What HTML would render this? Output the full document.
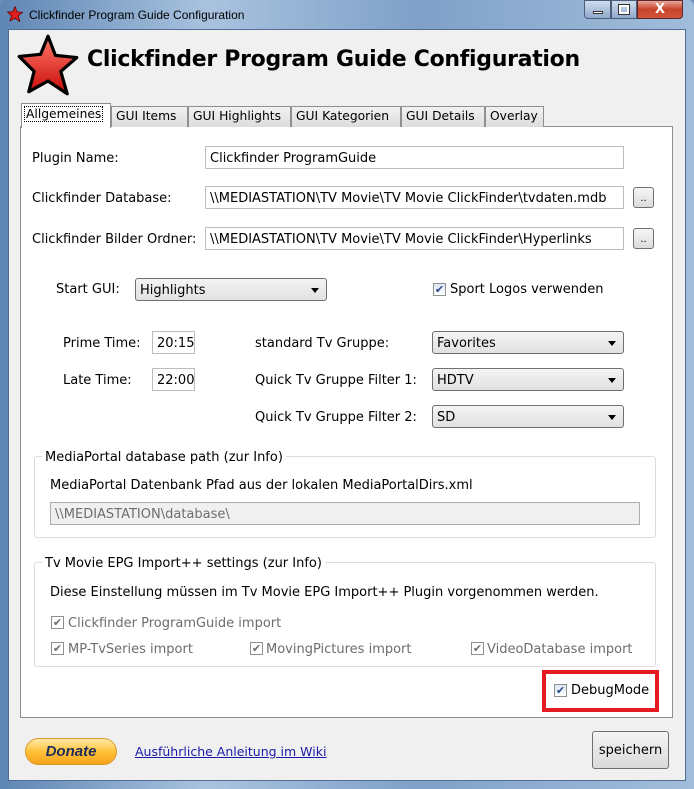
<!DOCTYPE html>
<html><head><meta charset="utf-8"><style>
*{box-sizing:border-box;margin:0;padding:0}
body{width:694px;height:789px;overflow:hidden;background:#6d8fb8;font-family:"DejaVu Sans","Liberation Sans",sans-serif;font-size:13px;color:#000;position:relative}
.a{position:absolute;white-space:nowrap}
.frame{position:absolute;left:0;top:0;width:694px;height:789px;background:linear-gradient(90deg,#5f86b4,#a9c3df 30%,#7fa0c8 60%,#a2bddb);border-radius:6px 6px 0 0}
.client{position:absolute;left:8px;top:29px;width:678px;height:752px;background:#f0f0f0;border:1px solid #526d92}
.panel{position:absolute;left:20px;top:126px;width:653px;height:592px;background:#fff;border:1px solid #8e8f8f}
.tab{position:absolute;top:106px;height:21px;background:linear-gradient(#f2f2f2,#dcdcdc);border:1px solid #8e8f8f;border-bottom:none;padding:2px 0 0 4px;font-size:12.3px;white-space:nowrap;overflow:hidden}
.inp{position:absolute;height:23px;background:#fff;border:1px solid #bdbdbd;padding:4px 0 0 4px;font-size:13px;white-space:nowrap;overflow:hidden}
.btn{position:absolute;width:21px;height:21px;border:1px solid #707070;border-radius:3px;background:linear-gradient(#f6f6f6,#dcdcdc);font-size:10px;text-align:center;line-height:22px}
.cb{position:absolute;width:13px;height:13px;border:1px solid #8e8f8f;background:linear-gradient(#dde6f2,#fff);font-size:11px;line-height:11px;text-align:center;color:#2a4a8a}
.dd{position:absolute;height:23px;border:1px solid #707070;border-radius:3px;background:linear-gradient(#f4f4f4,#e1e1e1);padding:4px 0 0 4px}
.dd:after{content:"";position:absolute;right:7px;top:9px;border:4px solid transparent;border-top:5px solid #000;border-bottom:none}
.grp{position:absolute;border:1px solid #dcdcdc;border-radius:3px}
.grey{color:#6d6d6d}
.t{margin-top:1px}
</style></head><body>
<div class="frame"></div>
<svg class="a" style="left:7px;top:6px" width="16" height="16" viewBox="0 0 60 60"><path d="M30 2 L38 22 L58 24 L42 37 L48 58 L30 46 L11 56 L17 37 L2 23 L22 21Z" fill="#e02020" stroke="#600" stroke-width="3"/></svg>
<div class="a" style="left:29px;top:8px;font-family:'Liberation Sans',sans-serif;font-size:12px">Clickfinder Program Guide Configuration</div>
<div class="a" style="left:584px;top:0;width:27px;height:19px;background:linear-gradient(#cfdcec,#8fa9cb);border:1px solid #4a5d7a;border-radius:0 0 0 4px"><div style="position:absolute;left:8px;top:10px;width:10px;height:3px;background:#fff;border:1px solid #333"></div></div>
<div class="a" style="left:611px;top:0;width:26px;height:19px;background:linear-gradient(#cfdcec,#8fa9cb);border:1px solid #4a5d7a"><div style="position:absolute;left:7px;top:4px;width:10px;height:9px;border:2px solid #fff;outline:1px solid #333"></div></div>
<div class="a" style="left:637px;top:0;width:46px;height:19px;background:linear-gradient(#e8a497,#c7432b 50%,#d0553a);border:1px solid #5a2a2a;border-radius:0 0 4px 0;color:#fff;font-weight:bold;text-align:center;font-size:13px;line-height:17px">X</div>
<div class="client"></div>
<svg class="a" style="left:16px;top:33px" width="64" height="64" viewBox="0 0 60 60"><defs><linearGradient id="g" x1="0" y1="0" x2="0" y2="1"><stop offset="0" stop-color="#ff7a6a"/><stop offset="1" stop-color="#c80a0a"/></linearGradient></defs><path d="M30 3 L37 21 L57 23 L42 36 L48 57 L30 45 L12 55 L17 36 L3 22 L23 20Z" fill="url(#g)" stroke="#000" stroke-width="3" stroke-linejoin="round"/></svg>
<div class="a" style="left:87px;top:47px;font-family:'DejaVu Sans',sans-serif;font-weight:bold;font-size:22px;letter-spacing:-0.3px">Clickfinder Program Guide Configuration</div>
<div class="panel"></div>
<div class="tab" style="left:111px;width:77px">GUI Items</div>
<div class="tab" style="left:188px;width:103px">GUI Highlights</div>
<div class="tab" style="left:291px;width:110px">GUI Kategorien</div>
<div class="tab" style="left:401px;width:84px">GUI Details</div>
<div class="tab" style="left:485px;width:59px">Overlay</div>
<div class="tab" style="left:21px;top:103px;width:90px;height:25px;background:#fff;padding:2px 2px"><span style="border:1px dotted #000;padding:0 1px;display:inline-block">Allgemeines</span></div>
<div class="a" style="left:32px;top:151px">Plugin Name:</div>
<div class="a" style="left:32px;top:191px">Clickfinder Database:</div>
<div class="a" style="left:32px;top:232px">Clickfinder Bilder Ordner:</div>
<div class="inp" style="left:205px;top:146px;width:419px">Clickfinder ProgramGuide</div>
<div class="inp" style="left:205px;top:186px;width:419px">\\MEDIASTATION\TV Movie\TV Movie ClickFinder\tvdaten.mdb</div>
<div class="inp" style="left:205px;top:227px;width:419px">\\MEDIASTATION\TV Movie\TV Movie ClickFinder\Hyperlinks</div>
<div class="btn" style="left:633px;top:187px">..</div>
<div class="btn" style="left:633px;top:228px">..</div>
<div class="a" style="left:56px;top:282px">Start GUI:</div>
<div class="dd" style="left:135px;top:278px;width:192px">Highlights</div>
<div class="cb" style="left:433px;top:283px">✔</div>
<div class="a" style="left:450px;top:282px">Sport Logos verwenden</div>
<div class="a" style="left:63px;top:336px">Prime Time:</div>
<div class="a" style="left:63px;top:373px">Late Time:</div>
<div class="inp" style="left:152px;top:331px;width:43px">20:15</div>
<div class="inp" style="left:152px;top:368px;width:43px">22:00</div>
<div class="a" style="left:255px;top:336px">standard Tv Gruppe:</div>
<div class="a" style="left:255px;top:373px">Quick Tv Gruppe Filter 1:</div>
<div class="a" style="left:255px;top:410px">Quick Tv Gruppe Filter 2:</div>
<div class="dd" style="left:432px;top:331px;width:192px">Favorites</div>
<div class="dd" style="left:432px;top:368px;width:192px">HDTV</div>
<div class="dd" style="left:432px;top:405px;width:192px">SD</div>
<div class="grp" style="left:34px;top:456px;width:622px;height:82px"></div>
<div class="a" style="left:42px;top:450px;background:#fff;padding:0 3px">MediaPortal database path (zur Info)</div>
<div class="a" style="left:50px;top:478px">MediaPortal Datenbank Pfad aus der lokalen MediaPortalDirs.xml</div>
<div class="inp grey" style="left:50px;top:502px;width:590px;background:#f0f0f0;border-color:#adadad">\\MEDIASTATION\database\</div>
<div class="grp" style="left:34px;top:562px;width:622px;height:105px"></div>
<div class="a" style="left:42px;top:556px;background:#fff;padding:0 3px">Tv Movie EPG Import++ settings (zur Info)</div>
<div class="a" style="left:50px;top:585px">Diese Einstellung müssen im Tv Movie EPG Import++ Plugin vorgenommen werden.</div>
<div class="cb grey" style="left:51px;top:616px;color:#6d6d6d;background:#fff">✔</div>
<div class="a grey" style="left:68px;top:616px">Clickfinder ProgramGuide import</div>
<div class="cb" style="left:51px;top:642px;color:#6d6d6d;background:#fff">✔</div>
<div class="a grey" style="left:68px;top:642px">MP-TvSeries import</div>
<div class="cb" style="left:250px;top:642px;color:#6d6d6d;background:#fff">✔</div>
<div class="a grey" style="left:266px;top:642px">MovingPictures import</div>
<div class="cb" style="left:471px;top:642px;color:#6d6d6d;background:#fff">✔</div>
<div class="a grey" style="left:487px;top:642px">VideoDatabase import</div>
<div class="a" style="left:542px;top:670px;width:117px;height:42px;border:4px solid #e41b23"></div>
<div class="cb" style="left:554px;top:684px">✔</div>
<div class="a" style="left:571px;top:683px">DebugMode</div>
<div class="a" style="left:25px;top:738px;width:92px;height:27px;border-radius:14px;border:1px solid #d89b2b;background:linear-gradient(#ffe9a8,#ffc23a 50%,#f7a21a);text-align:center;font-family:'Liberation Sans',sans-serif;font-weight:bold;font-style:italic;font-size:15px;line-height:25px;color:#1e2d5a">Donate</div>
<div class="a" style="left:135px;top:744px;color:#1a1aa6;text-decoration:underline;font-size:12.5px">Ausführliche Anleitung im Wiki</div>
<div class="a" style="left:592px;top:731px;width:77px;height:38px;border:1px solid #707070;border-radius:3px;background:linear-gradient(#f4f4f4,#dadada);text-align:center;line-height:37px">speichern</div>
</body></html>
